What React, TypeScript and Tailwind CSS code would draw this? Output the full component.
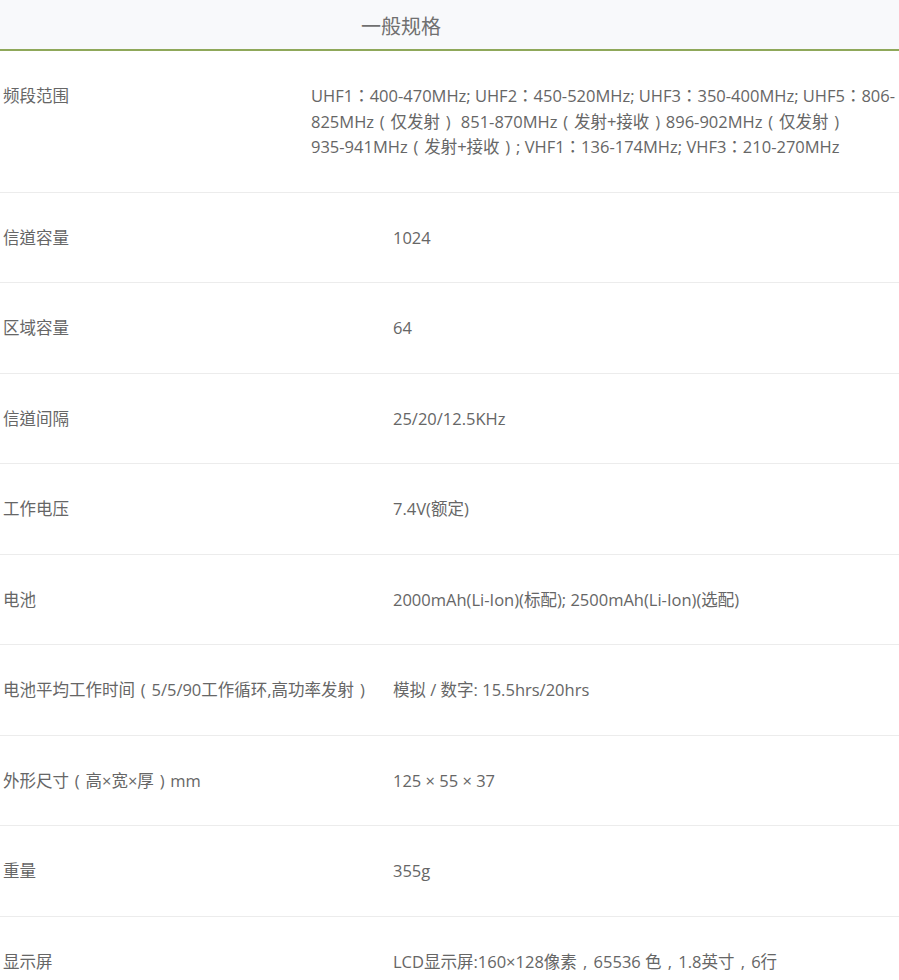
import type { ReactNode } from "react";

const rows: [string, string][] = [
  ["信道容量", "1024"],
  ["区域容量", "64"],
  ["信道间隔", "25/20/12.5KHz"],
  ["工作电压", "7.4V(额定)"],
  ["电池", "2000mAh(Li-Ion)(标配); 2500mAh(Li-Ion)(选配)"],
  ["电池平均工作时间（5/5/90工作循环,高功率发射）", "模拟 / 数字: 15.5hrs/20hrs"],
  ["外形尺寸（高×宽×厚）mm", "125 × 55 × 37"],
  ["重量", "355g"],
  ["显示屏", "LCD显示屏:160×128像素，65536 色，1.8英寸，6行"],
];

const bandLines = [
  "UHF1：400-470MHz; UHF2：450-520MHz; UHF3：350-400MHz; UHF5：806-",
  "825MHz（仅发射） 851-870MHz（发射+接收）896-902MHz（仅发射）",
  "935-941MHz（发射+接收）; VHF1：136-174MHz; VHF3：210-270MHz",
];

// centred full-width punctuation, as the page's font draws it
function fw(text: string): ReactNode[] {
  return text.split(/([（），])/).map((part, i) => {
    if (part === "（") return <span key={i} className="px-[0.352em]">(</span>;
    if (part === "）") return <span key={i} className="px-[0.352em]">)</span>;
    if (part === "，") return <span key={i} className="px-[0.377em]">,</span>;
    return part;
  });
}

export default function App() {
  return (
    <div
      className="w-[899px] bg-white text-[#666] text-[16.5px] leading-[25.5px]"
      style={{ fontFamily: '"Open Sans", "Noto Sans CJK TC", sans-serif' }}
    >
      <div className="h-[51px] border-b-2 border-[#8fa85a] bg-[#f8f9fb] pl-[361px] pt-[13px] text-[20px] leading-[28px] text-[#707070]">
        一般规格
      </div>
      <div className="flex border-b border-[#ececec] py-8">
        <div className="w-[311px] shrink-0 pl-[3px]">频段范围</div>
        <div className="flex flex-col whitespace-nowrap">
          {bandLines.map((line) => (
            <div key={line}>{fw(line)}</div>
          ))}
        </div>
      </div>
      {rows.map(([k, v], i) => (
        <div
          key={k}
          className={
            i === rows.length - 1
              ? "flex py-8"
              : "flex border-b border-[#ececec] py-8"
          }
        >
          <div className="w-[393px] shrink-0 pl-[3px]">{fw(k)}</div>
          <div>{fw(v)}</div>
        </div>
      ))}
    </div>
  );
}
